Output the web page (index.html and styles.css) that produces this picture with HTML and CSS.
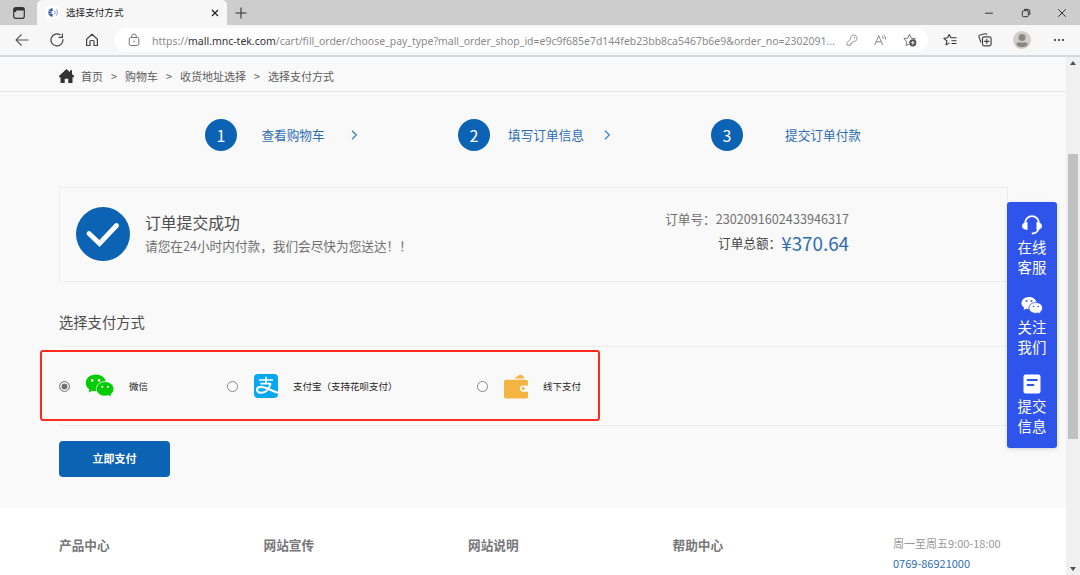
FILE: index.html
```html
<!DOCTYPE html>
<html lang="zh-CN">
<head>
    <meta charset="UTF-8">
    <meta name="viewport" content="width=device-width, initial-scale=1.0">
    <title>选择支付方式</title>
    <link rel="stylesheet" href="styles.css">
</head>
<body>
    <!-- Browser tabs -->
    <div class="tab-bar">
        <svg class="tab-menu" width="12" height="12" viewBox="0 0 12 12"><rect x=".7" y=".7" width="10.6" height="10.6" rx="2" fill="none" stroke="#333" stroke-width="1.2"/><path d="M1 1h10v2.6H1zM1 3h2.2v2H1z" fill="#333"/></svg>
        <div class="tab">
            <svg width="13" height="13" viewBox="0 0 13 13"><rect width="13" height="13" fill="#fff"/><path d="M6.5 2.2A4.3 4.3 0 1 0 6.5 10.8L7 8.6A2.2 2.2 0 0 1 7 4.4z" fill="#3c62b0"/><path d="M2 5.5h4M2 7.5h4" stroke="#9db5e0" stroke-width=".8"/><path d="M8.4 4.5q1.4 2 0 4M10.4 3.5q2 3 0 6" fill="none" stroke="#8fa9d8" stroke-width="1.1"/></svg>
            <span class="tab-title">选择支付方式</span>
            <svg width="8" height="8" viewBox="0 0 8 8"><path d="M1 1l6 6M7 1l-6 6" stroke="#222" stroke-width="1.2"/></svg>
        </div>
        <svg class="new-tab" width="12" height="12" viewBox="0 0 12 12"><path d="M6 .5v11M.5 6h11" stroke="#333" stroke-width="1.1"/></svg>
        <div class="window-buttons">
            <svg width="10" height="10" viewBox="0 0 10 10"><path d="M1 5.2h8" stroke="#333"/></svg>
            <svg width="10" height="10" viewBox="0 0 10 10"><g fill="none" stroke="#333"><rect x="1.3" y="2.7" width="6" height="6" rx="1.2"/><path d="M3 1.4h4a1.8 1.8 0 0 1 1.8 1.8V7"/></g></svg>
            <svg width="10" height="10" viewBox="0 0 10 10"><path d="M1.2 1.2l7.6 7.6M8.8 1.2L1.2 8.8" stroke="#333"/></svg>
        </div>
    </div>

    <!-- Toolbar with address -->
    <div class="toolbar">
        <div class="nav-buttons">
            <svg width="14" height="14" viewBox="0 0 14 14"><path d="M13.5 7H1M6.5 1.5L1 7l5.5 5.5" fill="none" stroke="#555" stroke-width="1.1"/></svg>
            <svg width="14" height="14" viewBox="0 0 14 14"><path d="M12.9 6.2A6 6 0 1 1 10.5 2.1M12.4 .5v3.800H8.6" fill="none" stroke="#444" stroke-width="1.2"/></svg>
            <svg width="14" height="14" viewBox="0 0 14 14"><path d="M1.6 6.2L7 1.2l5.4 5v6.3H9V8.5a1 1 0 0 0-1-1H6a1 1 0 0 0-1 1v4H1.6z" fill="none" stroke="#444" stroke-width="1.2" stroke-linejoin="round"/></svg>
        </div>
        <div class="address">
            <svg width="12" height="14" viewBox="0 0 12 14"><rect x="1.2" y="4.5" width="9.6" height="8" rx="1.3" fill="none" stroke="#777"/><path d="M3.7 4.5V3.2a2.3 2.3 0 0 1 4.6 0v1.3" fill="none" stroke="#777"/><circle cx="6" cy="8.5" r=".8" fill="#777"/></svg>
            <span class="url">https://<b>mall.mnc-tek.com</b>/cart/fill_order/choose_pay_type?mall_order_shop_id=e9c9f685e7d144feb23bb8ca5467b6e9&amp;order_no=2302091...</span>
            <div class="address-icons">
                <svg width="12" height="12" viewBox="0 0 12 12"><path d="M4.5 5A3.3 3.3 0 1 1 7.2 7.6L6 8.4v1.2H4.700v1.6H1V8.6z" fill="none" stroke="#999" stroke-linejoin="round"/><circle cx="8.5" cy="3.5" r=".7" fill="#999"/></svg>
                <svg width="13" height="12" viewBox="0 0 13 12"><path d="M.7 11L4.700 1.700 8.700 11M2 7.800h5.400M8 2q1.300 1 1 3M9.600 .8q2.300 1.600 1.900 4.700" fill="none" stroke="#888"/></svg>
                <svg width="14" height="14" viewBox="0 0 14 14"><path d="M6.3 11L3 12.5l.7-4L.9 5.6l3.9-.5L6.5 1.4l1.800 3.700 4 .5-1.200 1.200" fill="none" stroke="#777" stroke-linejoin="round"/><circle cx="9.8" cy="9.8" r="3.600" fill="#555"/><path d="M9.8 8v3.600M8 9.8h3.600" stroke="#fff" stroke-width=".9"/></svg>
            </div>
        </div>
        <div class="toolbar-icons">
            <svg width="14" height="14" viewBox="0 0 14 14"><path d="M6.5 9.9l-3.4 2 .8-4L.9 5.3l3.700-.5L6.2 1.5l1.700 3.300h5.600M8.500 7.700h5M8.500 10.500h5" fill="none" stroke="#333" stroke-width="1.1" stroke-linejoin="round"/></svg>
            <svg width="14" height="14" viewBox="0 0 14 14"><path d="M3 9.5L1 4a1.5 1.5 0 0 1 1-2l5-1.200a1.500 1.500 0 0 1 1.800 1.200" fill="none" stroke="#444" stroke-width="1.1"/><rect x="4.5" y="3.9" width="8.6" height="9" rx="1.8" fill="none" stroke="#444" stroke-width="1.2"/><path d="M8.8 5.7v5.400M6.1 8.4h5.400" stroke="#444" stroke-width="1.1"/></svg>
            <svg width="18" height="18" viewBox="0 0 18 18"><circle cx="9" cy="9" r="9" fill="#d0cecb"/><circle cx="9" cy="6.5" r="3.5" fill="#8b8783"/><path d="M3.3 13q0-1.500 1.700-1.500h8q1.700 0 1.700 1.500-1.700 3.300-5.700 3.300T3.300 13z" fill="#8b8783"/></svg>
            <svg width="14" height="4" viewBox="0 0 14 4"><g fill="#333"><circle cx="3" cy="2" r="1.1"/><circle cx="7" cy="2" r="1.1"/><circle cx="11" cy="2" r="1.1"/></g></svg>
        </div>
    </div>

    <div class="viewport">
        <div class="page">
            <div class="breadcrumb">
                <svg width="15" height="14" viewBox="0 0 15 14"><path d="M7.5 0L11 3.200V1.200h2v3.900L15 7v1.200h-1.500V14H9.300V9.800H5.700V14H1.500V8.200H0V7z" fill="#333"/></svg>
                <span>首页</span><i>&gt;</i><span>购物车</span><i>&gt;</i><span>收货地址选择</span><i>&gt;</i><span>选择支付方式</span>
            </div>

            <!-- Order steps -->
            <div class="steps">
                <div class="step">
                    <span class="step-number">1</span>
                    <span class="step-name">查看购物车</span>
                    <svg width="8" height="10" viewBox="0 0 8 10"><path d="M2 .8L6.3 5 2 9.2" fill="none" stroke="#3d7fbd" stroke-width="1.2"/></svg>
                </div>
                <div class="step">
                    <span class="step-number">2</span>
                    <span class="step-name">填写订单信息</span>
                    <svg width="8" height="10" viewBox="0 0 8 10"><path d="M2 .8L6.3 5 2 9.2" fill="none" stroke="#3d7fbd" stroke-width="1.2"/></svg>
                </div>
                <div class="step last">
                    <span class="step-number">3</span>
                    <span class="step-name">提交订单付款</span>
                </div>
            </div>

            <div class="order">
                <svg width="54" height="54" viewBox="0 0 54 54"><circle cx="27" cy="27" r="27" fill="#0c62b3"/><path d="M13 26.500l10.500 10L40.500 18.500" fill="none" stroke="#fff" stroke-width="4.8" stroke-linecap="round" stroke-linejoin="miter"/></svg>
                <div class="order-message">
                    <h1>订单提交成功</h1>
                    <p>请您在24小时内付款，我们会尽快为您送达！！</p>
                </div>
                <div class="order-info">
                    <p>订单号：2302091602433946317</p>
                    <p class="total">订单总额：<b>¥370.64</b></p>
                </div>
            </div>

            <h2>选择支付方式</h2>
            <div class="payments">
                <label class="payment wechat">
                    <input type="radio" name="pay" checked>
                    <svg width="30" height="24" viewBox="0 0 30 24"><path d="M10.800 .5C5 .5 .8 4.300 .8 9c0 2.700 1.400 5 3.700 6.500L3.500 18.600l3.700-1.800c1.200.3 2.400.5 3.600.5C16.600 17.300 21 13.500 21 9S16.600 .5 10.800 .5z" fill="#0c0"/><path d="M20 7.600c5 0 8.900 3.300 8.900 7.300 0 2.300-1.100 4.200-3 5.500l.8 2.700-3.100-1.500c-1.100.3-2.300.5-3.600.5-5 0-8.700-3.300-8.700-7.200S15 7.600 20 7.600z" fill="#0c0" stroke="#f9f9f9" stroke-width=".8"/><g fill="#f9f9f9"><circle cx="7.3" cy="6.4" r="1.3"/><circle cx="14" cy="6.4" r="1.3"/><circle cx="17.3" cy="12.8" r="1.1"/><circle cx="23" cy="12.8" r="1.1"/></g></svg>
                    <span>微信</span>
                </label>
                <label class="payment alipay">
                    <input type="radio" name="pay">
                    <svg width="24" height="24" viewBox="0 0 24 24"><rect width="24" height="24" rx="4" fill="#06a9f0"/><g fill="none" stroke="#fff"><path d="M11.900 2.800v7M5 6h14M6.500 9.700h10.500" stroke-width="1.700"/><path d="M16.600 9.500c-1.200 4.500-4.400 9.300-9 9.300-2.700 0-4.600-1-4.600-3s2-2.900 4.200-2.900c4 0 8.300 3 16.800 5.900" stroke-width="2.1"/></g></svg>
                    <span>支付宝（支持花呗支付）</span>
                </label>
                <label class="payment">
                    <input type="radio" name="pay">
                    <svg width="24" height="25" viewBox="0 0 24 25"><path d="M10 4.500L15.500 .9q3.600-.9 4.700 3.600z" fill="#f5b342"/><rect y="5.800" width="24" height="18.800" rx="2" fill="#f5b342"/><path d="M24 11.500h-5a3.100 3.100 0 0 0 0 6.200h5z" fill="#f9f9f9"/><path d="M24 12.500h-5a2.100 2.100 0 0 0 0 4.200h5z" fill="#f9f9f9"/><circle cx="19.200" cy="14.600" r="1.500" fill="#f5b342"/></svg>
                    <span>线下支付</span>
                </label>
                <div class="highlight"></div>
            </div>
            <button class="pay-button">立即支付</button>

            <div class="footer">
                <h3>产品中心</h3>
                <h3>网站宣传</h3>
                <h3>网站说明</h3>
                <h3>帮助中心</h3>
                <div class="contact">
                    <p>周一至周五9:00-18:00</p>
                    <p class="phone">0769-86921000</p>
                </div>
            </div>

            <!-- Floating contact menu -->
            <div class="side-menu">
                <div class="side-item">
                    <svg width="20" height="20" viewBox="0 0 20 20"><path d="M3.200 9V8a6.800 6.800 0 0 1 13.600 0v4.500q-.5 5.500-6.300 6" fill="none" stroke="#fff" stroke-width="1.800" stroke-linecap="round"/><path d="M5.500 7v8Q0 14.500 0 11t5.500-4zM14.500 7v8Q20 14.500 20 11t-5.500-4z" fill="#fff"/></svg>
                    <span>在线<br>客服</span>
                </div>
                <div class="side-item">
                    <svg width="22" height="20" viewBox="0 0 22 20"><path d="M8 2C3.600 2 .5 4.800 .5 8.100c0 2 1 3.600 2.700 4.700l-.7 2.200 2.800-1.200q1.300.3 2.700.3c4.300 0 7.500-2.600 7.500-6S12.300 2 8 2z" fill="#fff"/><path d="M14.700 7.500c4 0 6.900 2.400 6.900 5.500 0 1.700-.9 3.100-2.300 4.100l.5 1.900-2.400-1.100q-1.200.4-2.700.4c-3.900 0-6.800-2.300-6.800-5.300s2.900-5.500 6.800-5.500z" fill="#fff" stroke="#2f54eb" stroke-width=".8"/><g fill="#2f54eb"><circle cx="5.500" cy="6" r=".9"/><circle cx="10.500" cy="6" r=".9"/><circle cx="12.500" cy="11.500" r=".8"/><circle cx="17" cy="11.500" r=".8"/></g></svg>
                    <span>关注<br>我们</span>
                </div>
                <div class="side-item">
                    <svg width="18" height="20" viewBox="0 0 18 20"><rect x=".5" y=".5" width="17" height="19" rx="2" fill="#fff"/><path d="M4.500 6h9.500M4.500 11h6" stroke="#2f54eb" stroke-width="1.800" stroke-linecap="round"/></svg>
                    <span>提交<br>信息</span>
                </div>
            </div>
        </div>
        <div class="scrollbar">
            <svg width="6" height="4" viewBox="0 0 6 4"><path d="M3 0l3 4H0z" fill="#505050"/></svg>
            <div class="thumb"></div>
            <svg width="6" height="4" viewBox="0 0 6 4"><path d="M0 0h6L3 4z" fill="#505050"/></svg>
        </div>
    </div>
</body>
</html>
```
FILE: styles.css
```css
* {
    box-sizing: border-box;
    margin: 0;
    padding: 0;
}
body {
    width: 1080px;
    height: 575px;
    overflow: hidden;
    font-family: "Noto Sans CJK SC", sans-serif;
    font-size: 12.65px;
    color: #707070;
    background-color: #f9f9f9;
}
svg {
    display: block;
    flex-shrink: 0;
}
.tab-bar {
    display: flex;
    align-items: center;
    height: 25px;
    padding-left: 13px;
    background-color: #cdcdcd;
}
.tab {
    display: flex;
    align-items: center;
    width: 190px;
    height: 25px;
    margin-left: 12px;
    padding: 0 8px 0 9px;
    border-radius: 5px 5px 0 0;
    background-color: #f7f7f7;
}
.tab-title {
    flex: 1;
    margin-left: 7px;
    padding-bottom: 1px;
    font-size: 9.6px;
    color: #222;
}
.new-tab {
    margin-left: 8px;
}
.window-buttons {
    display: flex;
    gap: 26.500px;
    margin-left: auto;
    padding-right: 13px;
}
.toolbar {
    display: flex;
    align-items: center;
    height: 32px;
    padding-left: 15px;
    background-color: #f7f7f7;
    border-bottom: 2px solid #d3d8dc;
}
.nav-buttons {
    display: flex;
    gap: 21px;
    width: 99px;
}
.address {
    display: flex;
    align-items: center;
    width: 814px;
    height: 24px;
    padding: 0 11px 0 14px;
    border-radius: 12px;
    background-color: #fff;
}
.url {
    margin-left: 12px;
    padding-top: 1px;
    font-family: "Noto Sans", sans-serif;
    font-size: 10.47px;
    white-space: nowrap;
    color: #8a8a8a;
}
.url b {
    font-weight: normal;
    color: #333;
}
.address-icons {
    display: flex;
    align-items: center;
    gap: 16px;
    margin-left: auto;
}
.toolbar-icons {
    display: flex;
    align-items: center;
    gap: 21px;
    margin-left: 15px;
}
.viewport {
    display: flex;
    height: 518px;
}
.page {
    position: relative;
    width: 1066px;
}
.breadcrumb {
    display: flex;
    align-items: center;
    height: 35px;
    padding: 3px 0 0 59px;
    border-bottom: 1px solid #e4e4e4;
    font-size: 11px;
    color: #5c5c5c;
}
.breadcrumb svg {
    margin-right: 7px;
}
.breadcrumb i {
    width: 22px;
    text-align: center;
    font-style: normal;
}
.steps {
    display: flex;
    height: 95px;
    padding: 27px 0 0 205px;
}
.step {
    display: flex;
    align-items: center;
    width: 253px;
    height: 32px;
    color: #2e6db0;
}
.step-number {
    width: 32px;
    height: 32px;
    border-radius: 50%;
    line-height: 32px;
    text-align: center;
    font-size: 16px;
    color: #fff;
    background-color: #0c62b3;
}
.step-name {
    width: 112px;
    padding-bottom: 2px;
    text-align: center;
}
.step svg {
    margin-left: 1px;
}
.last .step-name {
    width: 160px;
}
.order {
    display: flex;
    align-items: center;
    width: 949px;
    height: 95px;
    margin-left: 59px;
    padding: 0 158px 2px 16px;
    border: 1px solid #ececec;
}
.order-message {
    margin-left: 15px;
}
h1 {
    font-size: 15.8px;
    font-weight: normal;
    line-height: 24px;
    color: #4c4c4c;
}
.order-message p {
    line-height: 22px;
}
.order-info {
    margin: 0 0 4px auto;
    text-align: right;
}
.order-info p {
    line-height: 22px;
}
.order-info .total {
    display: flex;
    align-items: center;
    justify-content: flex-end;
    height: 25px;
    color: #444;
}
.total b {
    font-size: 18.8px;
    font-weight: normal;
    color: #2e6db0;
}
h2 {
    height: 64px;
    margin-left: 59px;
    padding-top: 29px;
    font-size: 14.3px;
    font-weight: normal;
    line-height: 22px;
    color: #4c4c4c;
}
.payments {
    position: relative;
    display: flex;
    align-items: center;
    width: 949px;
    height: 80px;
    margin-left: 59px;
    border-top: 1px solid #ececec;
    border-bottom: 1px solid #ececec;
}
.payment {
    display: flex;
    align-items: center;
    width: 250px;
    font-size: 9.5px;
    color: #222;
}
.payment input {
    appearance: none;
    width: 11px;
    height: 11px;
    margin-right: 16px;
    border: 1px solid #858585;
    border-radius: 50%;
    background-color: #fff;
}
.payment input:checked {
    background-color: #707070;
    box-shadow: inset 0 0 0 1.5px #fff;
}
.payment span {
    margin-left: 15px;
}
.wechat {
    width: 168px;
}
.wechat input {
    margin-right: 15px;
}
.wechat span {
    margin-left: 14px;
}
/* Red frame around the payment choices */
.highlight {
    position: absolute;
    top: 3px;
    left: -19px;
    width: 560px;
    height: 71px;
    border: 2px solid #fb2b20;
    border-radius: 3px;
}
.pay-button {
    display: block;
    width: 111px;
    height: 36px;
    margin: 15px 0 31px 59px;
    padding-bottom: 2px;
    border: none;
    border-radius: 4px;
    font-family: inherit;
    font-size: 11px;
    font-weight: bold;
    color: #fff;
    background-color: #0c62b3;
}
.footer {
    display: flex;
    height: 67px;
    padding: 25px 0 0 59px;
    background-color: #fff;
}
.footer h3 {
    width: 204.5px;
    font-size: 12.65px;
    line-height: 23px;
    color: #777;
}
.contact {
    margin-left: 16px;
    font-size: 11px;
    line-height: 20px;
    color: #999;
}
.contact .phone {
    color: #2e6db0;
}
.side-menu {
    position: absolute;
    top: 145px;
    left: 1007px;
    width: 50px;
    height: 246px;
    padding-top: 13px;
    border-radius: 3px;
    color: #fff;
    background-color: #2f54eb;
    box-shadow: 0 1px 4px rgba(0, 0, 0, 0.15);
}
.side-item {
    display: flex;
    flex-direction: column;
    align-items: center;
    height: 79.5px;
    font-size: 14.4px;
    line-height: 20px;
}
.side-item span {
    margin-top: 2px;
}
.scrollbar {
    display: flex;
    flex-direction: column;
    align-items: center;
    width: 14px;
    padding: 4px 0;
    background-color: #f0f0f0;
}
.thumb {
    width: 10px;
    height: 285px;
    margin: 89px 0 auto;
    background-color: #c1c1c1;
}
```
